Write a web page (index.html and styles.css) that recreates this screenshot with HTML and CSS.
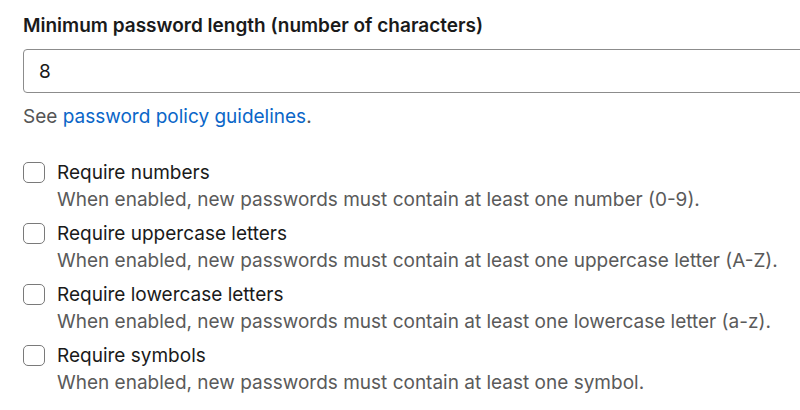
FILE: index.html
```html
<!DOCTYPE html>
<html>
<head>
<meta charset="utf-8">
<link rel="stylesheet" href="styles.css">
</head>
<body>
<div class="page">
  <label class="field-label" for="minlen">Minimum password length (number of characters)</label>
  <input class="text-input" id="minlen" type="text" value="8">
  <p class="help">See <a href="#" class="link">password policy guidelines</a>.</p>
  <div class="options">
    <div class="option">
      <span class="box"></span>
      <div class="option-text">
        <div class="option-title">Require numbers</div>
        <div class="option-desc">When enabled, new passwords must contain at least one number (0-9).</div>
      </div>
    </div>
    <div class="option">
      <span class="box"></span>
      <div class="option-text">
        <div class="option-title">Require uppercase letters</div>
        <div class="option-desc">When enabled, new passwords must contain at least one uppercase letter (A-Z).</div>
      </div>
    </div>
    <div class="option">
      <span class="box"></span>
      <div class="option-text">
        <div class="option-title">Require lowercase letters</div>
        <div class="option-desc">When enabled, new passwords must contain at least one lowercase letter (a-z).</div>
      </div>
    </div>
    <div class="option">
      <span class="box"></span>
      <div class="option-text">
        <div class="option-title">Require symbols</div>
        <div class="option-desc">When enabled, new passwords must contain at least one symbol.</div>
      </div>
    </div>
  </div>
</div>
</body>
</html>
```
FILE: styles.css
```css
html, body {
  margin: 0;
  padding: 0;
  background: #fff;
}
body {
  font-family: Inter, "Noto Sans", sans-serif;
  color: #1f1f1f;
  width: 800px;
  overflow: hidden;
}
.page {
  padding: 14px 0 0 23px;
}
.field-label {
  display: block;
  font-size: 19px;
  font-weight: 600;
  line-height: 24px;
  color: #1a1a1a;
}
.text-input {
  display: block;
  box-sizing: border-box;
  margin-top: 11px;
  width: 800px;
  height: 44px;
  border: 1px solid #8c8c8c;
  border-radius: 4px;
  padding: 0 15px;
  font-family: Inter, "Noto Sans", sans-serif;
  font-size: 19px;
  color: #1a1a1a;
  outline: none;
}
.help {
  margin: 12px 0 0;
  font-size: 19px;
  line-height: 24px;
  color: #555;
}
.link {
  color: #0a66c8;
  text-decoration: none;
}
.options {
  margin-top: 32px;
  display: flex;
  flex-direction: column;
  gap: 8px;
}
.option {
  display: flex;
  gap: 12px;
  align-items: flex-start;
}
.box {
  flex: none;
  box-sizing: border-box;
  width: 22px;
  height: 21px;
  margin-top: 1px;
  border: 1px solid #7a7a7a;
  border-radius: 5px;
  background: #fff;
}
.option-title {
  font-size: 19px;
  line-height: 24px;
  color: #1a1a1a;
}
.option-desc {
  font-size: 19px;
  line-height: 29px;
  color: #5a5a5a;
}
```
